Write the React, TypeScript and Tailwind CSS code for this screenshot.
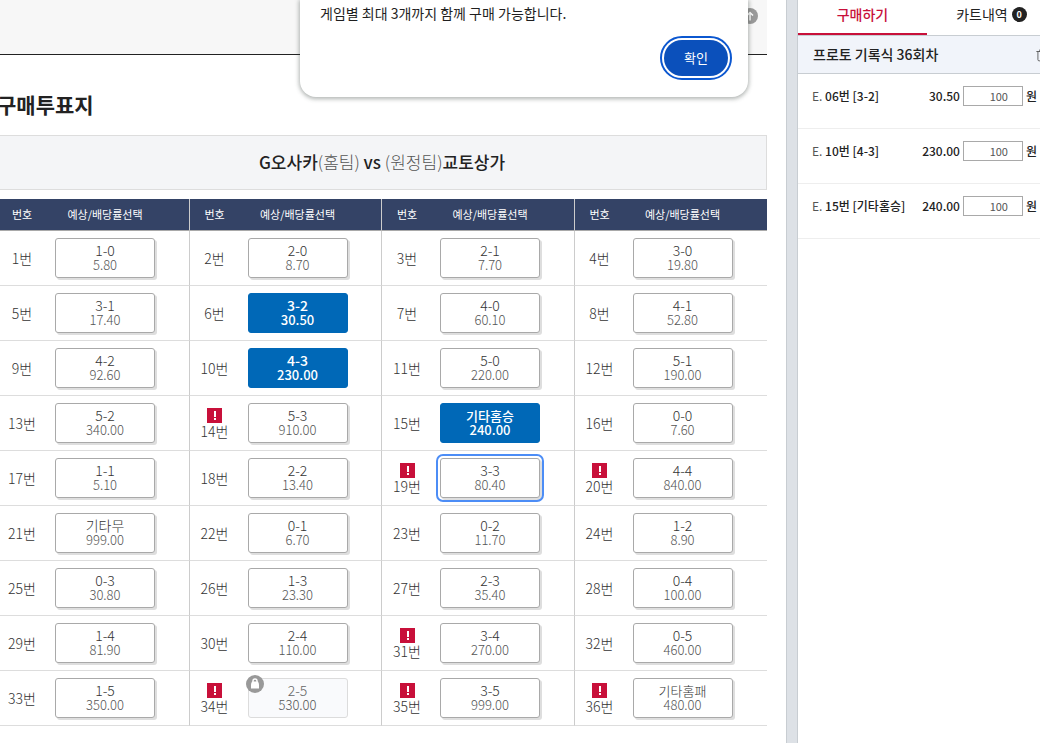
import React from "react";
import { Trash2 } from "lucide-react";

type Option = {
  no: number;
  label: string;
  odds: string;
  state?: "selected" | "focused" | "locked";
  alert?: boolean;
};

const options: Option[] = [
  { no: 1, label: "1-0", odds: "5.80" },
  { no: 2, label: "2-0", odds: "8.70" },
  { no: 3, label: "2-1", odds: "7.70" },
  { no: 4, label: "3-0", odds: "19.80" },
  { no: 5, label: "3-1", odds: "17.40" },
  { no: 6, label: "3-2", odds: "30.50", state: "selected" },
  { no: 7, label: "4-0", odds: "60.10" },
  { no: 8, label: "4-1", odds: "52.80" },
  { no: 9, label: "4-2", odds: "92.60" },
  { no: 10, label: "4-3", odds: "230.00", state: "selected" },
  { no: 11, label: "5-0", odds: "220.00" },
  { no: 12, label: "5-1", odds: "190.00" },
  { no: 13, label: "5-2", odds: "340.00" },
  { no: 14, label: "5-3", odds: "910.00", alert: true },
  { no: 15, label: "기타홈승", odds: "240.00", state: "selected" },
  { no: 16, label: "0-0", odds: "7.60" },
  { no: 17, label: "1-1", odds: "5.10" },
  { no: 18, label: "2-2", odds: "13.40" },
  { no: 19, label: "3-3", odds: "80.40", state: "focused", alert: true },
  { no: 20, label: "4-4", odds: "840.00", alert: true },
  { no: 21, label: "기타무", odds: "999.00" },
  { no: 22, label: "0-1", odds: "6.70" },
  { no: 23, label: "0-2", odds: "11.70" },
  { no: 24, label: "1-2", odds: "8.90" },
  { no: 25, label: "0-3", odds: "30.80" },
  { no: 26, label: "1-3", odds: "23.30" },
  { no: 27, label: "2-3", odds: "35.40" },
  { no: 28, label: "0-4", odds: "100.00" },
  { no: 29, label: "1-4", odds: "81.90" },
  { no: 30, label: "2-4", odds: "110.00" },
  { no: 31, label: "3-4", odds: "270.00", alert: true },
  { no: 32, label: "0-5", odds: "460.00" },
  { no: 33, label: "1-5", odds: "350.00" },
  { no: 34, label: "2-5", odds: "530.00", state: "locked", alert: true },
  { no: 35, label: "3-5", odds: "999.00", alert: true },
  { no: 36, label: "기타홈패", odds: "480.00", alert: true },
];

const rows = Array.from({ length: 9 }, (_, i) => options.slice(i * 4, i * 4 + 4));
const groups = [0, 1, 2, 3];

const slips = [
  { id: "06", label: "06번 [3-2]", odds: "30.50" },
  { id: "10", label: "10번 [4-3]", odds: "230.00" },
  { id: "15", label: "15번 [기타홈승]", odds: "240.00" },
];

function AlertMark() {
  return (
    <svg className="mx-auto mt-px block size-[15px]" viewBox="0 0 15 15" aria-hidden="true">
      <rect width="15" height="15" fill="#c8103a" />
      <path d="M7 3h2v6h-2zM7 10h2v2h-2z" fill="#fff" />
    </svg>
  );
}

function LockMark() {
  return (
    <svg className="absolute -top-[3px] -left-[2px] size-[18px]" viewBox="0 0 18 18" aria-hidden="true">
      <circle cx="9" cy="9" r="9" fill="#999" />
      <path d="M7 7V6a2 2 0 0 1 4 0v1" fill="none" stroke="#fff" strokeWidth="1.4" />
      <path d="M6 6.500h6q1 1.500 1 3.500v3.500H5V10q0-2 1-3.500z" fill="#fff" />
    </svg>
  );
}

const skins = {
  normal: "border-[#a9a9a9] bg-white text-[#333] font-light shadow-[2px_2px_0_#dedede]",
  selected: "border-[#0068b7] bg-[#0068b7] font-medium text-white",
  focused:
    "border-[#a9a9a9] bg-white text-[#333] font-light shadow-[2px_2px_0_#dedede] outline-2 outline-offset-2 outline-[#4c8df6]",
  locked: "border-[#dcdcdc] bg-[#f9fafc] text-[#666] font-light",
};

function OddsButton({ option }: { option: Option }) {
  const skin = skins[option.state ?? "normal"];
  const oddsColor = option.state === "selected" ? "text-white" : "text-[#555]";
  const labelSize = option.label.length > 3 ? "text-[13px]" : "text-[14px]";
  return (
    <div className="relative w-25">
      <button
        type="button"
        disabled={option.state === "locked"}
        className={`block h-10 w-full rounded-[3px] border pb-px text-center ${skin}`}
      >
        <span className={`block leading-[15px] ${labelSize}`}>{option.label}</span>
        <span className={`block text-[13px] leading-[14px] ${oddsColor}`}>{option.odds}</span>
      </button>
      {option.state === "locked" && <LockMark />}
    </div>
  );
}

function Ballot() {
  return (
    <table className="mt-[9px] w-full table-fixed border-separate border-spacing-0">
      <colgroup>
        {groups.map((g) => (
          <React.Fragment key={g}>
            <col className="w-[50px]" />
            <col />
          </React.Fragment>
        ))}
      </colgroup>
      <thead>
        <tr className="h-8 bg-[#344366] text-[11px] text-white">
          {groups.map((g) => (
            <React.Fragment key={g}>
              <th className="border-b border-[#a9a9a9] p-0 pb-px font-normal">번호</th>
              <th className="border-b border-[#a9a9a9] p-0 pb-px font-normal [&:not(:last-child)]:border-r [&:not(:last-child)]:border-r-[#ccc]">
                <span className="block w-29 text-center">예상/배당률선택</span>
              </th>
            </React.Fragment>
          ))}
        </tr>
      </thead>
      <tbody>
        {rows.map((row) => (
          <tr key={row[0].no} className="h-[55px]">
            {row.map((o) => (
              <React.Fragment key={o.no}>
                <td className="border-b border-[#ddd] p-0 text-center text-[14px] leading-[17px] font-light text-[#333]">
                  {o.alert && <AlertMark />}
                  {o.no}번
                </td>
                <td className="border-b border-[#ddd] p-0 pl-2 [&:not(:last-child)]:border-r [&:not(:last-child)]:border-r-[#ccc]">
                  <OddsButton option={o} />
                </td>
              </React.Fragment>
            ))}
          </tr>
        ))}
      </tbody>
    </table>
  );
}

function Notice() {
  return (
    <div
      role="alertdialog"
      aria-labelledby="notice"
      className="absolute top-0 left-1/2 z-10 -ml-[220px] w-[448px] rounded-b-2xl bg-white px-5 pt-[3px] pb-[21px] shadow-[0_1px_4px_1px_rgba(60,70,65,0.4)]"
    >
      <p id="notice" className="text-[14px] leading-5 text-[#1f1f1f]">
        게임별 최대 3개까지 함께 구매 가능합니다.
      </p>
      <div className="flex justify-end pt-[17px]">
        <button
          type="button"
          className="h-9 w-16 rounded-full bg-[#0b50bb] pb-px text-[13px] text-white outline-2 outline-offset-2 outline-[#0b57d0]"
        >
          확인
        </button>
      </div>
    </div>
  );
}

function Cart() {
  return (
    <aside className="w-[242px] shrink-0 overflow-hidden bg-white">
      <div className="w-[258px]">
        <div role="tablist" className="flex h-9 border-b border-[#c8cdd2] text-[14px]">
          <button
            type="button"
            role="tab"
            aria-selected="true"
            className="h-[35px] flex-1 border-b-2 border-[#c8103a] pb-[5px] font-medium text-[#c8103a]"
          >
            구매하기
          </button>
          <button
            type="button"
            role="tab"
            aria-selected="false"
            className="flex flex-1 items-center justify-center gap-1 pb-[6px] text-[#222]"
          >
            카트내역
            <span className="flex size-[15px] items-center justify-center rounded-full bg-[#222] text-[9px] font-bold text-white">
              0
            </span>
          </button>
        </div>
        <div className="flex h-[38px] items-center justify-between border-b border-[#c8cdd2] bg-[#f1f4fa] pr-[7px] pl-[15px]">
          <h2 className="text-[14px] font-medium text-[#222]">프로토 기록식 36회차</h2>
          <button type="button" aria-label="삭제" className="text-[#555]">
            <Trash2 size={14} strokeWidth={1.5} />
          </button>
        </div>
        <ul>
          {slips.map((s) => (
            <li
              key={s.id}
              className="flex h-[55px] items-start border-b border-[#eee] pt-3 pr-[19px] pl-[14px] text-[12px] leading-5 text-[#222]"
            >
              <span className="font-medium">
                <span className="font-normal text-[#555]">E.</span> {s.label}
              </span>
              <span className="ml-auto font-medium">{s.odds}</span>
              <label className="ml-[3px] flex items-start gap-[3px] font-medium">
                <input
                  type="text"
                  defaultValue="100"
                  className="h-5 w-[60px] border border-[#a9a9a9] bg-white pr-[14px] text-right text-[11px] font-normal text-[#555]"
                />
                원
              </label>
            </li>
          ))}
        </ul>
      </div>
    </aside>
  );
}

export default function App() {
  return (
    <div className="relative flex min-h-screen overflow-hidden bg-white font-['Noto_Sans_CJK_KR','Noto_Sans',sans-serif]">
      <main className="-ml-[3px] min-w-0 flex-1 pr-[19px]">
        <div className="flex h-[55px] justify-end border-b border-[#222] bg-[#f7f7f7] pt-2 pr-[9px]">
          <button type="button" aria-label="위로" className="h-4">
            <svg className="size-4" viewBox="0 0 16 16" aria-hidden="true">
              <circle cx="8" cy="8" r="8" fill="#999" />
              <path d="M8 12.5V5M5 7.5l3-3 3 3" fill="none" stroke="#fff" strokeWidth="1.5" />
            </svg>
          </button>
        </div>
        <h1 className="pt-[35px] text-[21px] leading-7 font-bold text-[#222]">구매투표지</h1>
        <div className="mt-[17px] flex h-[55px] items-center justify-center border border-[#ddd] bg-[#f4f5f7] pb-px text-[17px] font-medium text-[#222]">
          <p>
            G오사카<span className="font-light text-[#555]">(홈팀)</span> vs{" "}
            <span className="font-light text-[#555]">(원정팀)</span>교토상가
          </p>
        </div>
        <Ballot />
      </main>
      <div className="w-3 shrink-0 border-x border-[#c8cdd2] bg-[#dde1e6]" />
      <Cart />
      <Notice />
    </div>
  );
}
